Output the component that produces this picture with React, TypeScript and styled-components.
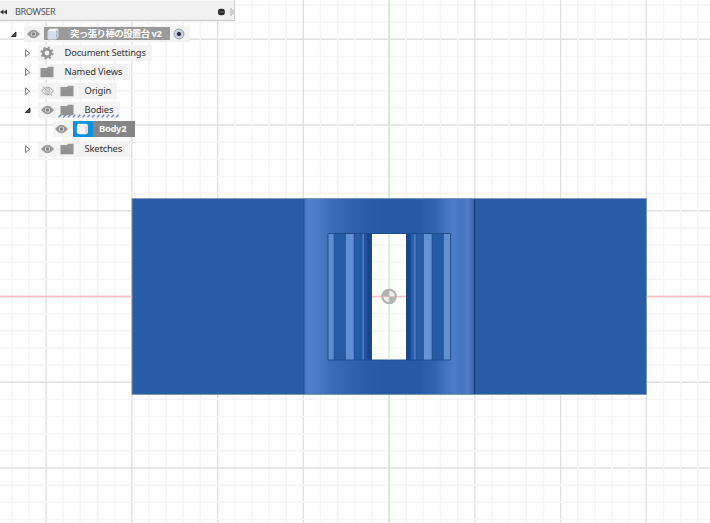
import React from "react";
import styled, { createGlobalStyle } from "styled-components";

const GlobalStyle = createGlobalStyle`
  html, body { margin: 0; padding: 0; overflow: hidden; background: #fefefe; }
`;

const Workspace = styled.main`
  position: relative;
  width: 710px;
  height: 523px;
  overflow: hidden;
  background: #fefefe;
  font-family: "Noto Sans", "Noto Sans CJK JP", sans-serif;
`;

const Viewport = styled.svg`
  display: block;
  width: 710px;
  height: 523px;
`;

const BrowserPanel = styled.aside`
  position: absolute;
  inset: 0 auto auto 0;
  width: 235px;
`;

const PanelHeader = styled.header`
  display: flex;
  align-items: center;
  box-sizing: border-box;
  width: 235px;
  height: 21px;
  padding: 2px 0 0 0;
  background: #f1f1f1;
  border-top: 1px solid #f8f8f8;
  border-right: 1px solid #d2d2d2;
  border-bottom: 1px solid #c9c9c9;
`;

const PanelTitle = styled.h1`
  flex: 1;
  margin: 0 0 0 7px;
  color: #555;
  font-size: 9.2px;
  font-weight: 400;
  line-height: 16px;
  letter-spacing: -0.42px;
`;

const Tree = styled.ul`
  display: flex;
  flex-direction: column;
  gap: 3.2px;
  margin: 0;
  padding: 4.5px 0 0;
  list-style: none;
`;

const Row = styled.li<{ $indent: number }>`
  display: flex;
  align-items: center;
  height: 16px;
  padding-left: ${(p) => p.$indent}px;
`;

const Toggle = styled.span`
  display: flex;
  justify-content: center;
  width: 16px;
  height: 16px;
  flex: none;
  margin-right: 0;
`;

const RowBody = styled.div<{ $width: number }>`
  display: flex;
  align-items: center;
  width: ${(p) => p.$width}px;
  height: 16px;
  background: #f3f3f3;
`;

const IconCell = styled.span<{ $width: number; $fill?: string }>`
  display: flex;
  align-items: center;
  justify-content: center;
  flex: none;
  width: ${(p) => p.$width}px;
  height: 100%;
  background: ${(p) => p.$fill ?? "transparent"};
`;

const Label = styled.span<{ $gap: number; $spacing?: number }>`
  margin-left: ${(p) => p.$gap}px;
  color: #333;
  font-size: 9.4px;
  line-height: 16px;
  letter-spacing: ${(p) => p.$spacing ?? -0.17}px;
  white-space: nowrap;
`;

const Selected = styled.div<{ $width: number; $height: number; $fill: string }>`
  display: flex;
  align-items: center;
  width: ${(p) => p.$width}px;
  height: ${(p) => p.$height}px;
  background: ${(p) => p.$fill};
`;

const SelectedLabel = styled(Label)`
  color: #fff;
  font-weight: 700;
`;

const Highlighted = styled.div`
  position: relative;
  display: flex;
  align-items: center;
  height: 16px;
`;

const HatchMark = styled.svg`
  position: absolute;
  left: 2px;
  top: 10.5px;
  width: 62px;
  height: 5px;
`;

const Eye = ({ hidden = false }: { hidden?: boolean }) => (
  <svg width="13" height="10" viewBox="0 0 13 10">
    <path
      d="M.5 5Q6.5-2.6 12.5 5Q6.5 12.6.5 5Z"
      fill={hidden ? "none" : "#979797"}
      stroke="#979797"
      strokeWidth=".9"
    />
    <circle cx="6.5" cy="5" r="2.5" fill={hidden ? "none" : "#dcdcdc"} stroke={hidden ? "#9d9d9d" : "none"} strokeWidth=".8" />
    <circle cx="6.5" cy="5" r="1.7" fill={hidden ? "#c4c4c4" : "#808080"} />
    {hidden && <path d="M2 .5 11 9.5" stroke="#f3f3f3" strokeWidth="2" />}
    {hidden && <path d="M1.8.6 11.2 9.6" stroke="#8c8c8c" strokeWidth=".9" />}
  </svg>
);

const Folder = () => (
  <svg width="14" height="12" viewBox="0 0 14 12">
    <path d="M.5 2H7L8.3.7H13.5V11.2H.5Z" fill="#929292" />
    <path d="M.5 3.1H7.4L8.6 2.1H13.5" fill="none" stroke="#a9a9a9" strokeWidth=".5" />
  </svg>
);

const Gear = () => (
  <svg width="14" height="14" viewBox="0 0 14 14">
    <circle cx="7" cy="7" r="5.4" fill="none" stroke="#929292" strokeWidth="2.2" strokeDasharray="2.12 2.12" />
    <circle cx="7" cy="7" r="3.7" fill="none" stroke="#929292" strokeWidth="2.5" />
  </svg>
);

const Arrow = ({ open = false }: { open?: boolean }) => (
  <svg width="10" height="16" viewBox="0 0 10 16">
    {open ? (
      <path d="M.4 10.4 4.9 6V10.4Z" fill="#555" stroke="#222" strokeWidth="1" />
    ) : (
      <path d="M.6 4.8 4.6 8.2 .6 11.6Z" fill="#fff" stroke="#555" strokeWidth=".8" />
    )}
  </svg>
);

const Component = () => (
  <svg width="12" height="12" viewBox="0 0 12 12">
    <path d="M1 3 3 1H11V9L9 11H1Z" fill="#aebccd" stroke="#edf1f5" strokeWidth=".7" />
    <path d="M1 3 3 1H11L9 3Z" fill="#f4f7fa" />
    <path d="M1.3 3H9V10.7H1.3Z" fill="#d5dee8" />
  </svg>
);

const BodyIcon = () => (
  <svg width="13" height="12" viewBox="0 0 13 12">
    <rect x=".8" y=".8" width="11.2" height="10.4" rx="2.4" fill="#f4f6f8" />
    <path d="M9.5 3 11.6 2V9.2L9.5 11Z" fill="#d5dae0" />
    <path d="M1.5 3.2H9.4V10.6" fill="none" stroke="#d8dfe5" strokeWidth=".6" />
  </svg>
);

const Activate = () => (
  <svg width="12" height="12" viewBox="0 0 12 12">
    <circle cx="6" cy="6" r="4.9" fill="#e9edf4" stroke="#858991" strokeWidth=".9" />
    <circle cx="6" cy="6" r="3.7" fill="#bdc6d6" />
    <circle cx="6" cy="6" r="2" fill="#25282d" />
  </svg>
);

const Collapse = () => (
  <svg width="8" height="8" viewBox="0 0 8 8">
    <path d="M0 4 3.5 1.5V6.5ZM3.5 4 7 1.5V6.5Z" fill="#333" />
  </svg>
);

const Minimize = () => (
  <svg width="16" height="10" viewBox="0 0 16 10">
    <rect x="0" y="1.8" width="6.8" height="6.4" rx="2.6" fill="#292929" />
    <path d="M1.5 5H5.5" stroke="#888" strokeWidth=".7" />
    <path d="M13 1V9M15 2.5V7.5" stroke="#999" strokeWidth=".8" />
  </svg>
);

const CX = 389.1;
const CY = 296.5;
const STEP = 17.15;
const steps = Array.from({ length: 47 }, (_, i) => i - 23);

const Grid = () => (
  <g>
    {steps.map((n) => (
      <g key={n} stroke={n % 5 === 0 ? "#dfdfdf" : "#f5f5f5"} strokeWidth={n % 5 === 0 ? 1.3 : 1.5}>
        <path d={`M${CX + n * STEP} 0V523`} />
        <path d={`M0 ${CY + n * STEP}H710`} />
      </g>
    ))}
  </g>
);

type Strip = [x: number, width: number, fill: string];

const strips: Strip[] = [
  [328, 6, "#5e8dd1"],
  [334, 11.5, "#265ba6"],
  [345.5, 8.5, "#608fd3"],
  [354, 8, "#275ba5"],
  [362, 2.5, "#4d7dc3"],
  [364.5, 2.5, "#2555a0"],
  [367, 2, "#174489"],
  [369, 3, "#174890"],
  [406, 3, "#164890"],
  [409, 2, "#1b4b94"],
  [411, 2.5, "#2b61ae"],
  [413.5, 2.5, "#4d7ec6"],
  [416, 7.5, "#275ca7"],
  [423.5, 8.5, "#6492d6"],
  [432, 11.5, "#265aa5"],
  [443.5, 7, "#6190d3"],
];

const edges = [334, 345.5, 354, 362, 364.5, 367.5, 369.5, 408.5, 410.5, 413.2, 416, 423.5, 432, 443.5];

const Model = () => (
  <g>
    <path d="M132 198.5H646.5V394.5H132Z" fill="#295da6" />
    <path d="M304 198.5H474.5V394.5H304Z" fill="url(#curve)" />
    {strips.map(([x, width, fill]) => (
      <rect key={x} x={x} y="233.5" width={width} height="126.5" fill={fill} />
    ))}
    {edges.map((x) => (
      <path key={x} d={`M${x} 234V360`} stroke="#17468e" strokeWidth=".7" opacity=".75" />
    ))}
    <path d="M328 233.5H450.5V360H328Z" fill="none" stroke="#204c8c" strokeWidth="1" />
    <path d="M372 234H406V359.5H372Z" fill="#fefefe" />
    <g stroke="#f5f5f5" strokeWidth="1.3">
      {[-3, -2, -1, 1, 2, 3].map((n) => (
        <path key={n} d={`M372 ${CY + n * STEP}H406`} />
      ))}
    </g>
    <path d="M304 199V394" stroke="#204f95" strokeWidth=".9" />
    <path d="M474.5 199V394" stroke="#173f7d" strokeWidth="1.2" />
    <path d="M132 198.5H646.5V394.5H132Z" fill="none" stroke="#8094b0" strokeWidth=".9" />
  </g>
);

const Axes = () => (
  <g>
    <path d="M0 296.5H131.5M647 296.5H710M372 296.5H406" stroke="#ffbcc0" strokeWidth="1.4" />
    <path d="M389.1 0V198M389.1 234V359.5M389.1 395V523" stroke="#bdf8bd" strokeWidth="1.4" />
    <circle cx="389.1" cy="296.5" r="6.8" fill="#efefef" stroke="#b0b0ae" strokeWidth="2" />
    <path d="M389.1 296.5V289.7A6.8 6.8 0 0 0 382.3 296.5ZM389.1 296.5H395.9A6.8 6.8 0 0 1 389.1 303.3Z" fill="#b4b4b2" />
    <path d="M389.1 291.5V301.5" stroke="#a8d6a8" strokeWidth=".9" />
    <path d="M384 296.5H394" stroke="#e4b0b0" strokeWidth=".8" />
  </g>
);

const Scene = () => (
  <Viewport viewBox="0 0 710 523">
    <defs>
      <linearGradient id="curve" gradientUnits="userSpaceOnUse" x1="304" x2="474.5" y1="0" y2="0">
        <stop offset="0" stopColor="#4677c1" />
        <stop offset=".035" stopColor="#5080ca" />
        <stop offset=".09" stopColor="#4a7ac4" />
        <stop offset=".15" stopColor="#3d6eb9" />
        <stop offset=".25" stopColor="#3163af" />
        <stop offset=".38" stopColor="#295da9" />
        <stop offset=".5" stopColor="#275aa4" />
        <stop offset=".68" stopColor="#275ba7" />
        <stop offset=".77" stopColor="#3164b0" />
        <stop offset=".83" stopColor="#4474c0" />
        <stop offset=".88" stopColor="#4b7cc8" />
        <stop offset=".93" stopColor="#4575bd" />
        <stop offset=".96" stopColor="#4e7fc8" />
        <stop offset=".98" stopColor="#4271b8" />
        <stop offset="1" stopColor="#3766ad" />
      </linearGradient>
    </defs>
    <Grid />
    <Model />
    <Axes />
  </Viewport>
);

type Entry = { name: string; width: number; icon?: "gear"; eye?: "on" | "off" };

const EntryRow = ({ name, width, icon, eye }: Entry) => (
  <Row $indent={22}>
    <Toggle><Arrow /></Toggle>
    <RowBody $width={width}>
      {eye && <IconCell $width={18}><Eye hidden={eye === "off"} /></IconCell>}
      <IconCell $width={eye ? 22 : 18}>{icon === "gear" ? <Gear /> : <Folder />}</IconCell>
      <Label $gap={eye ? 6.5 : 8.5}>{name}</Label>
    </RowBody>
  </Row>
);

export default function App() {
  return (
    <>
      <GlobalStyle />
      <Workspace>
        <Scene />
        <BrowserPanel>
          <PanelHeader>
            <Collapse />
            <PanelTitle>BROWSER</PanelTitle>
            <Minimize />
          </PanelHeader>
          <Tree>
            <Row $indent={8}>
              <Toggle><Arrow open /></Toggle>
              <RowBody $width={166}>
                <IconCell $width={18}><Eye /></IconCell>
                <IconCell $width={2} />
                <Selected $width={126} $height={13} $fill="#9a9a9a">
                  <IconCell $width={18}><Component /></IconCell>
                  <SelectedLabel $gap={8} $spacing={-0.52}>突っ張り棒の設置台 v2</SelectedLabel>
                </Selected>
                <IconCell $width={18}><Activate /></IconCell>
              </RowBody>
            </Row>
            <EntryRow name="Document Settings" width={114} icon="gear" />
            <EntryRow name="Named Views" width={92} />
            <EntryRow name="Origin" width={79} eye="off" />
            <Row $indent={22}>
              <Toggle><Arrow open /></Toggle>
              <RowBody $width={82}>
                <IconCell $width={18}><Eye /></IconCell>
                <Highlighted>
                  <IconCell $width={22}><Folder /></IconCell>
                  <Label $gap={6.5}>Bodies</Label>
                  <HatchMark viewBox="0 0 62 5">
                    {Array.from({ length: 13 }, (_, i) => (
                      <path key={i} d={`M${i * 4.8 + 0.5} 4.4L${i * 4.8 + 3} 1.7`} stroke="#6f87b8" strokeWidth="1.3" />
                    ))}
                  </HatchMark>
                </Highlighted>
              </RowBody>
            </Row>
            <Row $indent={53}>
              <RowBody $width={82}>
                <IconCell $width={17}><Eye /></IconCell>
                <IconCell $width={3} />
                <IconCell $width={19.5} $fill="#0d91d6"><BodyIcon /></IconCell>
                <Selected $width={42.5} $height={16} $fill="#858585">
                  <SelectedLabel $gap={6.5} $spacing={-0.3}>Body2</SelectedLabel>
                </Selected>
              </RowBody>
            </Row>
            <EntryRow name="Sketches" width={92} eye="on" />
          </Tree>
        </BrowserPanel>
      </Workspace>
    </>
  );
}
